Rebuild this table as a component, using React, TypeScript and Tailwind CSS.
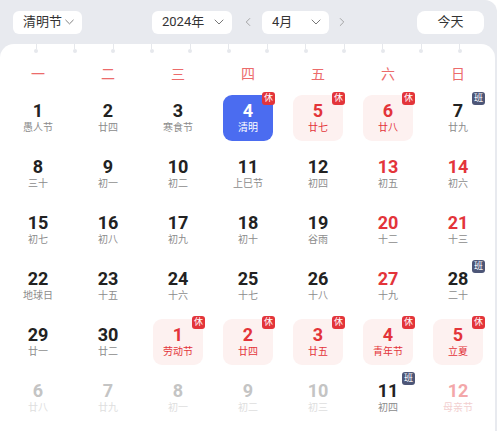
import { ChevronDown, ChevronLeft, ChevronRight } from "lucide-react";

type Kind =
  | "normal"
  | "weekend"
  | "today"
  | "holiday"
  | "work"
  | "fade"
  | "fadeWeekend"
  | "fadeWork";

type Day = { d: number; l: string; k: Kind };

const n = (d: number, l: string, k: Kind = "normal"): Day => ({ d, l, k });

const weeks: Day[][] = [
  [n(1, "愚人节"), n(2, "廿四"), n(3, "寒食节"), n(4, "清明", "today"), n(5, "廿七", "holiday"), n(6, "廿八", "holiday"), n(7, "廿九", "work")],
  [n(8, "三十"), n(9, "初一"), n(10, "初二"), n(11, "上巳节"), n(12, "初四"), n(13, "初五", "weekend"), n(14, "初六", "weekend")],
  [n(15, "初七"), n(16, "初八"), n(17, "初九"), n(18, "初十"), n(19, "谷雨"), n(20, "十二", "weekend"), n(21, "十三", "weekend")],
  [n(22, "地球日"), n(23, "十五"), n(24, "十六"), n(25, "十七"), n(26, "十八"), n(27, "十九", "weekend"), n(28, "二十", "work")],
  [n(29, "廿一"), n(30, "廿二"), n(1, "劳动节", "holiday"), n(2, "廿四", "holiday"), n(3, "廿五", "holiday"), n(4, "青年节", "holiday"), n(5, "立夏", "holiday")],
  [n(6, "廿八", "fade"), n(7, "廿九", "fade"), n(8, "初一", "fade"), n(9, "初二", "fade"), n(10, "初三", "fade"), n(11, "初四", "fadeWork"), n(12, "母亲节", "fadeWeekend")],
];

const styles: Record<Kind, { box: string; num: string; lunar: string }> = {
  normal: { box: "", num: "text-[#222]", lunar: "text-[#8c8c8c]" },
  weekend: { box: "", num: "text-[#e3343a]", lunar: "text-[#8c8c8c]" },
  today: { box: "bg-[#4b6cf0]", num: "text-white", lunar: "text-white" },
  holiday: { box: "bg-[#fdf1f0]", num: "text-[#e3343a]", lunar: "text-[#e3343a]" },
  work: { box: "", num: "text-[#222]", lunar: "text-[#8c8c8c]" },
  fade: { box: "", num: "text-[#c4c4c4]", lunar: "text-[#dedede]" },
  fadeWeekend: { box: "", num: "text-[#f3a7a9]", lunar: "text-[#f2cfd0]" },
  fadeWork: { box: "", num: "text-[#222]", lunar: "text-[#8c8c8c]" },
};

const weekdays = ["一", "二", "三", "四", "五", "六", "日"];

function Select({ label, width }: { label: string; width: string }) {
  return (
    <div className={`${width} h-[23px] bg-white rounded-[6px] flex items-center justify-between pl-[10px] pr-[5px] text-[13px] text-[#333] whitespace-nowrap`}>
      <span>{label}</span>
      <ChevronDown className="w-[16px] h-[16px] text-[#777]" strokeWidth={1.5} />
    </div>
  );
}

function Cell({ day }: { day: Day }) {
  const s = styles[day.k];
  const rest = day.k === "today" || day.k === "holiday";
  const work = day.k === "work" || day.k === "fadeWork";
  return (
    <div className="h-[56px] flex items-center justify-center">
      <div className={`relative w-[50px] h-[46px] rounded-[9px] flex flex-col items-center justify-center ${s.box}`}>
        <span className={`text-[18px] font-bold leading-[20px] ${s.num}`}>{day.d}</span>
        <span className={`text-[10px] leading-[14px] ${s.lunar}`}>{day.l}</span>
        {rest && (
          <span className="absolute -top-[3px] -right-[2px] w-[13px] h-[13px] rounded-[3px] bg-[#e3343a] text-white text-[9px] leading-[13px] text-center">
            休
          </span>
        )}
        {work && (
          <span className="absolute -top-[3px] -right-[2px] w-[13px] h-[13px] rounded-[3px] bg-[#4d5677] text-white text-[9px] leading-[13px] text-center">
            班
          </span>
        )}
      </div>
    </div>
  );
}

export default function App() {
  return (
    <div
      className="w-[500px] h-[431px] bg-white overflow-hidden"
      style={{ fontFamily: 'Roboto, "Noto Sans CJK SC", sans-serif' }}
    >
      <div className="w-[497px] h-[431px] bg-[#e8eaef] rounded-tr-[12px] flex flex-col">
        {/* toolbar */}
        <div className="h-[44px] flex items-center pl-[13px] pr-[13px]">
          <Select label="清明节" width="w-[69px]" />
          <div className="ml-[70px] flex items-center">
            <Select label="2024年" width="w-[80px]" />
            <ChevronLeft className="w-[14px] h-[14px] ml-[9px] text-[#999]" strokeWidth={1.5} />
            <div className="ml-[7px]">
              <Select label="4月" width="w-[67px]" />
            </div>
            <ChevronRight className="w-[14px] h-[14px] ml-[6px] text-[#999]" strokeWidth={1.5} />
          </div>
          <div className="ml-auto w-[67px] h-[23px] bg-white rounded-[8px] flex items-center justify-center text-[13px] text-[#333]">
            今天
          </div>
        </div>

        {/* card */}
        <div className="w-[495px] flex-1 bg-white rounded-t-[14px]">
          <div className="h-[14px] flex justify-between pl-[34px] pr-[33px]">
            {Array.from({ length: 12 }).map((_, i) => (
              <div key={i} className="flex flex-col items-center">
                <div className="w-[1px] h-[5px] bg-[#e6e8ec]" />
                <div className="w-[4px] h-[4px] rounded-full bg-[#e6e8ec]" />
              </div>
            ))}
          </div>
          <div className="ml-[3px] w-[490px] grid grid-cols-7 h-[32px] items-center">
            {weekdays.map((w) => (
              <div key={w} className="text-center text-[14px] text-[#ec6b6b]">
                {w}
              </div>
            ))}
          </div>
          <div className="ml-[3px] w-[490px] grid grid-cols-7">
            {weeks.flat().map((day, i) => (
              <Cell key={i} day={day} />
            ))}
          </div>
        </div>
      </div>
    </div>
  );
}
